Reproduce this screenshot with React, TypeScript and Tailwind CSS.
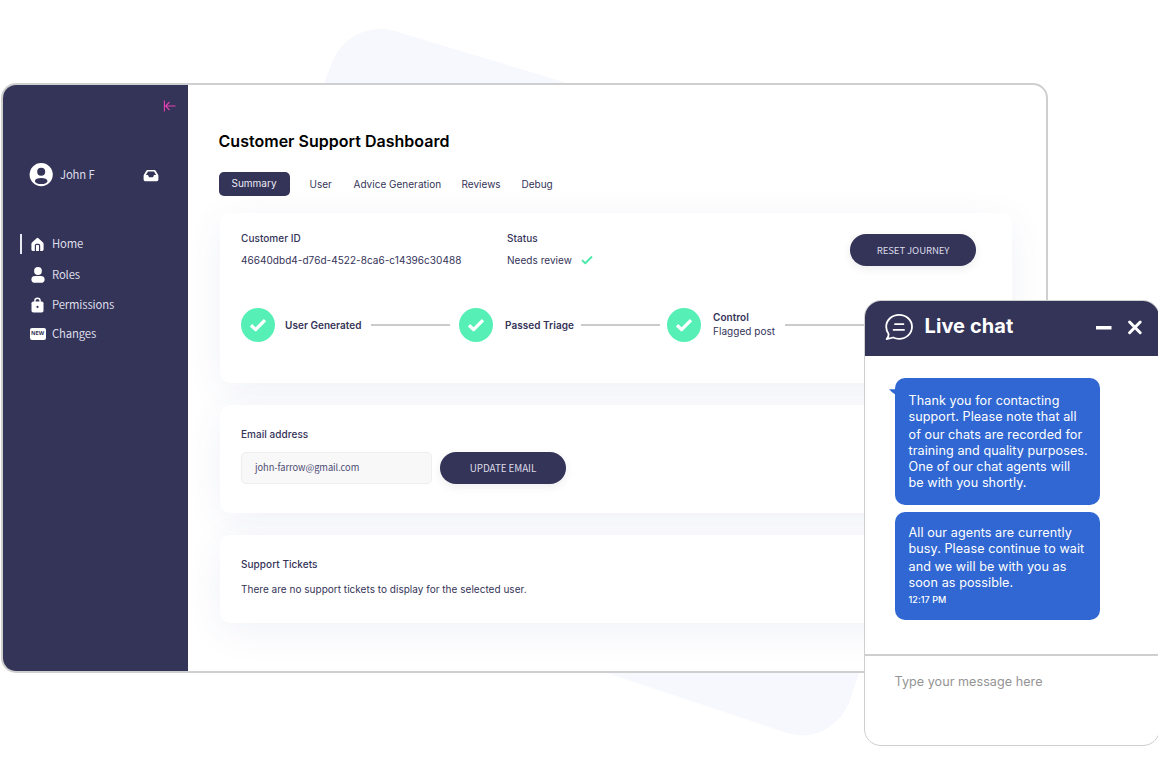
import React from "react";

const source = "font-['Noto_Sans_CJK_SC',sans-serif]";

function Check({ className, stroke, width }: { className: string; stroke: string; width: number }) {
  return (
    <svg viewBox="0 0 18 14" className={className} fill="none" stroke={stroke} strokeWidth={width} strokeLinejoin="round">
      <path d="M2 7.2 L6.6 11.6 L16 2.2" />
    </svg>
  );
}

function NavItem({ icon, label, className }: { icon: React.ReactNode; label: string; className: string }) {
  return (
    <div className={`flex items-center ${className}`}>
      <div className="flex w-[21px] shrink-0 items-center justify-center">{icon}</div>
      <span className="ml-1 text-[11.3px] leading-none tracking-[-0.15px] whitespace-nowrap text-[#dedeea]">
        {label}
      </span>
    </div>
  );
}

function Sidebar() {
  return (
    <aside className={`flex w-[185px] shrink-0 flex-col bg-[#343358] ${source}`}>
      <div className="flex justify-end pt-[15px] pr-[12.5px]">
        <svg className="h-3 w-[13px]" viewBox="0 0 13 12" fill="none" stroke="#e83eb4" strokeWidth="1.1">
          <path d="M1.4 0.5V11.5M12.5 6H3M6.5 2L2.6 6L6.5 10" />
        </svg>
      </div>
      <div className="mt-[51px] flex h-6 items-center pl-[26px]">
        <svg className="size-6" viewBox="0 0 24 24">
          <circle cx="12.2" cy="11.6" r="11.6" fill="#fff" />
          <circle cx="12.2" cy="8.8" r="4" fill="#343358" />
          <ellipse cx="12.2" cy="18" rx="6.3" ry="3.1" fill="#343358" />
        </svg>
        <span className="ml-[7px] w-[83px] text-[11.3px] leading-none tracking-[-0.15px] text-[#dedeea]">
          John F
        </span>
        <svg className="h-[13px] w-4" viewBox="0 0 16 13">
          <path
            fill="#fff"
            fillRule="evenodd"
            d="M4.6 1H11.4Q12.2 1 12.7 1.7L15 5.500Q15.4 6.2 15.4 7V10.6Q15.4 12.2 13.8 12.2H2.2Q.6 12.2 .6 10.6V7Q.6 6.2 1 5.500L3.3 1.7Q3.8 1 4.6 1ZM5 2.500L2.9 6.1H5L6 8.3H10L11 6.1H13.1L11 2.500Z"
          />
        </svg>
      </div>
      <nav className="mt-[47px] flex flex-col">
        <div className="flex h-5 items-center">
          <div className="ml-[16.5px] h-5 w-[2.5px] bg-[#e9e9f2]" />
          <NavItem
            className="ml-[5px]"
            label="Home"
            icon={
              <svg className="h-[15px] w-[13px]" viewBox="0 0 13 15">
                <path
                  fill="#fff"
                  d="M6.5 .8Q7 .8 7.4 1.2L12 5.4Q12.6 6 12.6 6.8V12.6Q12.6 14 11.2 14H1.8Q.4 14 .4 12.6V6.8Q.4 6 1 5.4L5.6 1.2Q6 .8 6.5 .8Z"
                />
                <path d="M4.4 14V8.6Q4.4 7.4 5.6 7.4H7.4Q8.6 7.4 8.6 8.6V14" fill="none" stroke="#343358" strokeWidth="1.2" />
              </svg>
            }
          />
        </div>
        <NavItem
          className="mt-[13px] ml-6 h-4"
          label="Roles"
          icon={
            <svg className="h-4 w-[14px]" viewBox="0 0 14 16" fill="#fff">
              <circle cx="7" cy="4" r="3.9" />
              <rect x=".4" y="9" width="13.2" height="6.8" rx="4" ry="3.4" />
            </svg>
          }
        />
        <NavItem
          className="mt-[14px] ml-6 h-4"
          label="Permissions"
          icon={
            <svg className="h-4 w-[13px]" viewBox="0 0 13 16">
              <path d="M3.9 6V3.5Q3.9 1.2 6.5 1.2T9.1 3.5V6" fill="none" stroke="#fff" strokeWidth="1.4" />
              <rect x=".5" y="4.4" width="12" height="11.2" rx="1.8" fill="#fff" />
              <circle cx="6.5" cy="9.9" r="1.1" fill="#343358" />
            </svg>
          }
        />
        <NavItem
          className="mt-[13px] ml-6 h-4"
          label="Changes"
          icon={
            <span className="flex h-3 w-4 items-center justify-center rounded-[2px] bg-white font-['Open_Sans',sans-serif] text-[5.6px] leading-none font-bold text-[#343358]">
              NEW
            </span>
          }
        />
      </nav>
    </aside>
  );
}

function StepMark() {
  return (
    <div className="flex size-[34px] shrink-0 items-center justify-center rounded-full bg-[#56f0b7]">
      <Check className="h-[14px] w-[18px]" stroke="#fff" width={3.3} />
    </div>
  );
}

const card = "rounded-[10px] bg-white pl-[21px] shadow-[0_8px_36px_rgba(70,85,165,0.075)]";
const pill = `flex h-8 w-[126px] items-center justify-center rounded-full bg-[#343358] pt-[2px] leading-none tracking-[-0.1px] text-[#dcdce8] shadow-[0_3px_8px_rgba(52,51,88,0.09)] ${source}`;

function Main() {
  return (
    <main className="flex min-w-0 flex-1 flex-col pr-[34px] pl-[30.5px] text-[#343358]">
      <h1 className="mt-12 text-[16px] leading-[17px] font-semibold tracking-[0.02px] text-black">Customer Support Dashboard</h1>
      <div className="mt-[21.5px] flex h-6 items-center text-[10px] leading-none tracking-[0.01px]">
        <div className="flex h-6 w-[71px] items-center justify-center rounded-[5px] bg-[#343358] pb-px text-[#ececf4]">Summary</div>
        <span className="ml-5 w-11">User</span>
        <span className="w-[108px]">Advice Generation</span>
        <span className="w-[60px]">Reviews</span>
        <span>Debug</span>
      </div>

      <section className={`mt-[17px] ml-[1.5px] h-[170px] ${card}`}>
        <div className="flex pt-[18.5px]">
          <div className="w-[266px]">
            <div className="text-[10px] leading-[14px] font-medium tracking-[0.05px]">Customer ID</div>
            <div className="mt-2 text-[10px] leading-[14px] tracking-[0.04px]">46640dbd4-d76d-4522-8ca6-c14396c30488</div>
          </div>
          <div className="w-[343px]">
            <div className="text-[10px] leading-[14px] font-medium tracking-[0.05px]">Status</div>
            <div className="mt-2 flex items-center text-[10px] leading-[14px] tracking-[0.04px]">
              Needs review
              <Check className="ml-2 h-[10px] w-[14px]" stroke="#4fe9ac" width={2.8} />
            </div>
          </div>
          <div className={`mt-[3px] text-[9.6px] ${pill}`}>RESET JOURNEY</div>
        </div>
        <div className="mt-[41px] flex h-[34px] items-center text-[10px] leading-[14px] tracking-[0.04px] whitespace-nowrap">
          <StepMark />
          <span className="ml-[10px] w-[86px] font-semibold">User Generated</span>
          <div className="mr-[9px] h-[2px] w-[79px] shrink-0 bg-[#cbcbcb]" />
          <StepMark />
          <span className="ml-3 w-[76px] font-semibold">Passed Triage</span>
          <div className="mr-[7px] h-[2px] w-[79px] shrink-0 bg-[#cbcbcb]" />
          <StepMark />
          <span className="ml-3 w-[72px] pb-[2px]">
            <b className="block font-semibold">Control</b>
            Flagged post
          </span>
          <div className="h-[2px] w-[100px] shrink-0 bg-[#cbcbcb]" />
        </div>
      </section>

      <section className={`mt-[22px] ml-[1.5px] h-[108px] ${card}`}>
        <div className="pt-[22px] text-[10px] leading-[14px] font-medium tracking-[0.05px]">Email address</div>
        <div className="mt-[11px] flex">
          <div className={`mr-2 flex h-8 w-[191px] items-center rounded-[5px] border border-[#eeeeef] bg-[#f8f8f9] pt-px pl-[13px] text-[9.3px] leading-none tracking-[-0.05px] text-[#4d4c73] ${source}`}>
            john-farrow@gmail.com
          </div>
          <div className={`text-[9.9px] ${pill}`}>UPDATE EMAIL</div>
        </div>
      </section>

      <section className={`mt-[22px] ml-[1.5px] h-[88px] ${card}`}>
        <div className="pt-[22px] text-[10px] leading-[14px] font-medium tracking-[0.05px]">Support Tickets</div>
        <div className="mt-[11px] text-[10px] leading-[14px] tracking-[0.02px]">There are no support tickets to display for the selected user.</div>
      </section>
    </main>
  );
}

function Chat() {
  return (
    <div className="absolute top-[300px] left-[864px] flex h-[446px] w-[296px] flex-col overflow-hidden rounded-[17px] border border-[#cfcfcf] bg-white">
      <header className="flex h-[55px] shrink-0 items-center bg-[#343358] pl-5 text-white">
        <svg className="mt-[-3px] h-7 w-7" viewBox="0 0 28 28" fill="none" stroke="#fff" strokeWidth="1.8" strokeLinejoin="round" strokeLinecap="round">
          <path d="M3.6 21Q1.2 17.8 1.2 13.8C1.2 7 7 1.8 14.1 1.8S27 7 27 13.8S21.2 25.8 14.1 25.8Q10.8 25.8 8.2 24.5L1.6 26.1Q3.8 24.2 3.6 21Z" />
          <path d="M10 11.2H18.4M8.6 16.9H19" />
        </svg>
        <span className="mt-[-5px] ml-[11.5px] w-[171px] text-[20px] leading-6 font-bold tracking-[0.08px]">Live chat</span>
        <svg className="mt-[-3px] h-4 w-[48px]" viewBox="0 0 48 16" fill="none" stroke="#fff">
          <path d="M0 8.8H15.5" strokeWidth="3.6" />
          <path d="M33.6 3L44.2 13.7M44.2 3L33.6 13.7" strokeWidth="3" strokeLinecap="round" />
        </svg>
      </header>
      <div className="h-[300px] shrink-0 border-b-2 border-[#cfcfcf] pt-[22px] pl-[30px] text-[12.6px] leading-4 tracking-[0.08px] whitespace-nowrap text-white">
        <div className="relative flex h-[127px] w-[205px] flex-col rounded-[10px] bg-[#3067d2] pt-[15px] pl-[13.5px]">
          <svg className="absolute top-[11px] -left-[6px] h-[6px] w-[7px]" viewBox="0 0 7 6">
            <path d="M0 .3H7V6Q2 2.8 0 .3Z" fill="#3067d2" />
          </svg>
          <span>Thank you for contacting</span>
          <span>support. Please note that all</span>
          <span className="mt-[2px]">of our chats are recorded for</span>
          <span>training and quality purposes.</span>
          <span>One of our chat agents will</span>
          <span>be with you shortly.</span>
        </div>
        <div className="mt-[7px] flex h-[107.5px] w-[205px] flex-col rounded-[10px] bg-[#3067d2] pt-[13px] pl-[13.5px]">
          <span>All our agents are currently</span>
          <span>busy. Please continue to wait</span>
          <span className="mt-[2px]">and we will be with you as</span>
          <span>soon as possible.</span>
          <span className="mt-px text-[9px] leading-4 font-medium">12:17 PM</span>
        </div>
      </div>
      <div className="pt-[18px] pl-[29.5px] text-[12.6px] leading-4 tracking-[0.04px] text-[#949494]">Type your message here</div>
    </div>
  );
}

export default function App() {
  return (
    <div className="relative h-[772px] w-[1158px] overflow-hidden bg-white font-[Inter,sans-serif]">
      <svg className="absolute inset-0 h-full w-full" viewBox="0 0 1158 772" fill="#f7f8fe">
        <path d="M323 86L333 60C344 38 362 29 382 29Q390 29 401 33L577 86ZM598 670L784 732Q793 735 801 735.500C823 735.500 842 722 850 700L860 670Z" />
      </svg>
      <div className="relative pt-[83px] pl-px">
        <div className="flex h-[590px] w-[1047px] overflow-hidden rounded-[15px] border-2 border-[#cfcfcf] bg-white">
          <Sidebar />
          <Main />
        </div>
      </div>
      <Chat />
    </div>
  );
}
